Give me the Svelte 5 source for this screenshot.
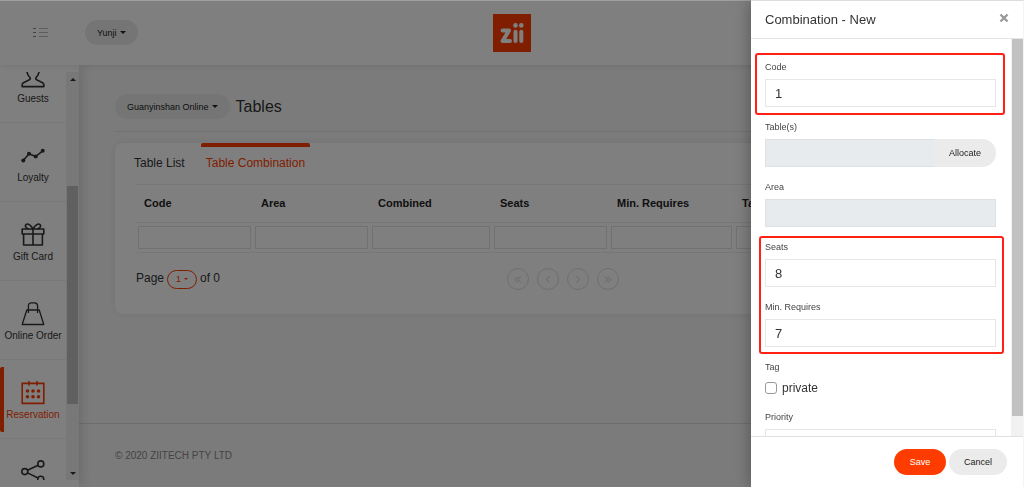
<script>
  const navItems = [
    { label: 'Guests', icon: 'guests' },
    { label: 'Loyalty', icon: 'loyalty' },
    { label: 'Gift Card', icon: 'gift' },
    { label: 'Online Order', icon: 'bag' },
    { label: 'Reservation', icon: 'calendar', active: true },
    { label: '', icon: 'share' }
  ];
  const columns = [
    { name: 'Code', size: 's' },
    { name: 'Area', size: 's' },
    { name: 'Combined', size: 'm' },
    { name: 'Seats', size: 's' },
    { name: 'Min. Requires', size: 'l' },
    { name: 'Tag', size: 'rest' }
  ];
  const pagers = [
    { label: 'First page', d: 'M6 2.5 3 5.5 6 8.5M9 2.5 6 5.5 9 8.5' },
    { label: 'Previous page', d: 'M7.5 2.5 4.5 5.5 7.5 8.5' },
    { label: 'Next page', d: 'M4.5 2.5 7.5 5.5 4.5 8.5' },
    { label: 'Last page', d: 'M3 2.5 6 5.5 3 8.5M6 2.5 9 5.5 6 8.5' }
  ];
  let code = $state('1');
  let tables = $state('');
  let area = $state('');
  let seats = $state('8');
  let minimum = $state('7');
  let isPrivate = $state(false);
  let priority = $state('');
</script>

<div class="app">
  <header class="topbar">
    <button class="menu" aria-label="Toggle menu">
      <svg width="16" height="11" viewBox="0 0 16 11" fill="none">
        <path d="M1 1.5H4M1 5.5H4M1 9.5H4" stroke="#888" />
        <path d="M7 1.5H16M7 5.5H16M7 9.5H16" stroke="#bbb" />
      </svg>
    </button>
    <button class="pill">Yunji<i class="caret"></i></button>
    <a class="logo" href="#home" aria-label="zii">
      <svg width="38" height="38" viewBox="0 0 38 38">
        <rect width="38" height="38" fill="#ff3c00" />
        <g fill="none" stroke="#fff" stroke-width="4" stroke-linejoin="round" stroke-linecap="round">
          <path d="M9.6 16.5H16L9.6 27H17" />
          <path d="M22.5 17.8V27M28.3 17.8V27" />
        </g>
        <circle cx="22.5" cy="11.4" r="2.3" fill="#fff" />
        <circle cx="28.3" cy="11.4" r="2.3" fill="#fff" />
      </svg>
    </a>
  </header>

  <div class="shell">
    <aside class="sidebar">
      <nav>
        <ul>
          {#each navItems as item}
            <li class:active={item.active}>
              <a href="#{item.icon}" aria-label={item.label || item.icon}>
                <svg width="24" height="24" viewBox="0 0 24 24" fill="none" stroke="currentColor" stroke-width="1.6" stroke-linejoin="round">
                  {#if item.icon === 'guests'}
                    <path d="M5.8 5.5C6 9.5 7.2 11 9 12.6Q9.8 14 8.4 14.8L2.4 17.8Q1.1 18.6 1.1 20V21.6H22.9V20Q22.9 18.6 21.6 17.8L15.6 14.8Q14.2 14 15 12.6C16.8 11 18 9.5 18.2 5.5" />
                  {:else if item.icon === 'loyalty'}
                    <path d="M2.3 16.5 8 9.8 14.7 12.5 21.7 6.8" />
                    <g fill="currentColor" stroke="none">
                      <circle cx="2.3" cy="16.5" r="2" /><circle cx="8" cy="9.8" r="2" />
                      <circle cx="14.7" cy="12.5" r="2" /><circle cx="21.7" cy="6.8" r="2" />
                    </g>
                  {:else if item.icon === 'gift'}
                    <path d="M1.2 6H22.8V11H1.2ZM2.6 11V22H21.4V11M12 6V22" />
                    <path d="M12 6C10 2.4 7 .2 5.2 1.4 3.5 2.8 4.8 5 7.5 6M12 6C14 2.4 17 .2 18.8 1.4 20.5 2.8 19.2 5 16.5 6" />
                  {:else if item.icon === 'bag'}
                    <path d="M5.8 8H18.2L22.8 22.5H1.2Z" stroke-width="1.3" />
                    <path d="M7.4 11V4Q7.4 .8 10.4 .8H13.6Q16.6 .8 16.6 4V11" stroke-width="1.3" />
                  {:else if item.icon === 'calendar'}
                    <path d="M1.2 2.4H22.8V22.4H1.2ZM8 0V4.5M16 0V4.5" stroke-linejoin="miter" />
                    <g fill="currentColor" stroke="none">
                      <circle cx="6.5" cy="10" r="1.8" /><circle cx="12" cy="10" r="1.8" /><circle cx="17.5" cy="10" r="1.8" />
                      <circle cx="6.5" cy="15.7" r="1.8" /><circle cx="12" cy="15.7" r="1.8" /><circle cx="17.5" cy="15.7" r="1.8" />
                    </g>
                  {:else}
                    <circle cx="3.8" cy="11.6" r="3" /><circle cx="19.8" cy="3.9" r="3" /><circle cx="19.8" cy="19.3" r="3" />
                    <path d="M6.5 10.3 17.1 5.2M6.5 12.9 17.1 18" />
                  {/if}
                </svg>
                {#if item.label}<span>{item.label}</span>{/if}
              </a>
            </li>
          {/each}
        </ul>
        <div class="track" aria-hidden="true">
          <i class="up"></i><i class="thumb"></i><i class="down"></i>
        </div>
      </nav>
    </aside>

    <div class="page">
      <main>
        <div class="heading">
          <button class="pill">Guanyinshan Online<i class="caret"></i></button>
          <h1>Tables</h1>
        </div>
        <section class="card">
          <div class="tabs" role="tablist">
            <button role="tab" aria-selected="false">Table List</button>
            <button role="tab" aria-selected="true">Table Combination</button>
          </div>
          <table>
            <colgroup>
              {#each columns as column}<col class={column.size} />{/each}
            </colgroup>
            <thead>
              <tr>{#each columns as column}<th>{column.name}</th>{/each}</tr>
            </thead>
            <tbody>
              <tr>
                {#each columns as column}
                  <td><input type="text" aria-label="Filter {column.name}" /></td>
                {/each}
              </tr>
            </tbody>
          </table>
          <div class="paging">
            <div class="pageinfo">
              <span>Page</span>
              <button class="pagenum">1<i class="caret"></i></button>
              <span>of 0</span>
            </div>
            <div class="pagers">
              {#each pagers as pager}
                <button aria-label={pager.label}>
                  <svg width="12" height="11" viewBox="0 0 12 11" fill="none" stroke="currentColor"><path d={pager.d} /></svg>
                </button>
              {/each}
            </div>
          </div>
        </section>
      </main>
      <footer>© 2020 ZIITECH PTY LTD</footer>
    </div>
  </div>

  <div class="backdrop"></div>

  <div class="drawer" role="dialog" aria-label="Combination - New">
    <div class="drawer-head">
      <h2>Combination - New</h2>
      <button class="close" aria-label="Close">
        <svg width="10" height="10" viewBox="0 0 10 10" stroke="#999" stroke-width="2.4"><path d="M1.5 1.5 8.5 8.5M8.5 1.5 1.5 8.5" /></svg>
      </button>
    </div>
    <div class="drawer-body">
      <form>
        <div class="group first">
          <div class="field">
            <label for="code">Code</label>
            <input id="code" type="text" bind:value={code} />
          </div>
        </div>
        <div class="field">
          <label for="tables">Table(s)</label>
          <div class="combo">
            <input id="tables" type="text" disabled bind:value={tables} />
            <button type="button">Allocate</button>
          </div>
        </div>
        <div class="field">
          <label for="area">Area</label>
          <input id="area" type="text" disabled bind:value={area} />
        </div>
        <div class="group second">
          <div class="field">
            <label for="seats">Seats</label>
            <input id="seats" type="text" bind:value={seats} />
          </div>
          <div class="field">
            <label for="minimum">Min. Requires</label>
            <input id="minimum" type="text" bind:value={minimum} />
          </div>
        </div>
        <div class="field tag">
          <span class="caption">Tag</span>
          <label class="check"><input type="checkbox" bind:checked={isPrivate} />private</label>
        </div>
        <div class="field">
          <label for="priority">Priority</label>
          <input id="priority" type="text" bind:value={priority} />
        </div>
      </form>
      <div class="drawer-track" aria-hidden="true"><i></i></div>
    </div>
    <div class="drawer-foot">
      <button class="save">Save</button>
      <button class="cancel">Cancel</button>
    </div>
  </div>
</div>

<style>
  :global(body) { margin: 0; }
  .app, .app * { box-sizing: border-box; }
  .app {
    display: flex;
    flex-direction: column;
    height: 100vh;
    overflow: hidden;
    background: #f7f7f7;
    color: #333;
    font-family: "Liberation Sans", Arial, sans-serif;
    font-size: 12px;
  }
  button, input { font-family: inherit; color: inherit; margin: 0; }
  button { border: 0; padding: 0; background: none; }
  h1, h2 { margin: 0; font-weight: 400; }

  .topbar {
    position: relative;
    z-index: 2;
    flex: none;
    display: flex;
    align-items: center;
    gap: 36px;
    height: 65px;
    padding-left: 32px;
    background: #fff;
    box-shadow: 0 0 8px rgba(0, 0, 0, 0.12);
  }
  .menu { display: flex; width: 17px; }
  .logo { display: flex; position: absolute; left: 50%; transform: translateX(-50%); }
  .pill {
    display: flex;
    align-items: center;
    gap: 3px;
    height: 25px;
    padding: 0 12px;
    border-radius: 13px;
    background: #ebebeb;
    color: #222;
    font-size: 9px;
    white-space: nowrap;
  }
  .caret {
    border: 3px solid transparent;
    border-top-color: currentColor;
    border-bottom: 0;
  }

  .shell { flex: 1; display: flex; min-height: 0; }
  .sidebar {
    position: relative;
    z-index: 1;
    flex: none;
    width: 79px;
    padding: 7px 0;
    background: #fff;
    box-shadow: 0 0 14px rgba(0, 0, 0, 0.2);
  }
  nav { display: flex; height: 100%; overflow: hidden; }
  ul { flex: 1; list-style: none; margin: -28px 0 0; padding: 0; }
  li { height: 79px; border-bottom: 1px solid #f0f0f0; }
  li a {
    display: flex;
    flex-direction: column;
    align-items: center;
    gap: 3px;
    height: 72px;
    padding-top: 21px;
    color: #333;
    font-size: 10px;
    line-height: 14px;
    text-decoration: none;
    white-space: nowrap;
  }
  li.active { padding-top: 7px; }
  li.active a {
    height: 65px;
    padding-top: 14px;
    color: #ff3c00;
    background: linear-gradient(#ff3c00, #ff3c00) left / 4px 100% no-repeat;
    border-radius: 2px;
  }
  .track {
    flex: none;
    display: flex;
    flex-direction: column;
    align-items: center;
    width: 13px;
    background: #f1f1f1;
  }
  .track i { flex: none; }
  .track .up, .track .down { border: 3px solid transparent; }
  .track .up { margin-top: 6px; border-bottom-color: #333; border-top: 0; }
  .track .down { margin: auto 0 5px; border-top-color: #333; border-bottom: 0; }
  .track .thumb { width: 11px; height: 218px; margin-top: 105px; background: #c1c1c1; }

  .page { flex: 1; display: flex; flex-direction: column; min-width: 0; }
  main { flex: 1; padding: 29px 36px 0; }
  .heading {
    display: flex;
    align-items: center;
    gap: 6px;
    height: 38px;
    padding-bottom: 12px;
    border-bottom: 1px solid #e4e4e4;
  }
  h1 { font-size: 16px; line-height: 20px; }
  .card {
    margin-top: 11px;
    padding: 0 20px 14px 21px;
    border-radius: 8px;
    background: #fff;
    box-shadow: 0 0 8px rgba(0, 0, 0, 0.08);
  }
  .tabs { display: flex; gap: 11px; height: 41px; margin-left: -7px; }
  .tabs button {
    height: 40px;
    padding: 0 5px 4px;
    border-top: 4px solid transparent;
    font-size: 12px;
    line-height: 32px;
  }
  .tabs [aria-selected="true"] {
    color: #ff3c00;
    background: linear-gradient(#ff3c00, #ff3c00) top / 100% 4px no-repeat border-box;
    border-radius: 2px;
  }
  table { width: 100%; table-layout: fixed; border-collapse: collapse; }
  col.s { width: 117px; }
  col.m { width: 122px; }
  col.l { width: 125px; }
  tr { border-top: 1px solid #eee; border-bottom: 1px solid #eee; }
  th { height: 38px; padding: 0 8px 2px; color: #222; font-size: 11px; text-align: left; }
  td { height: 30px; padding: 0 2px; }
  td input { display: block; width: 100%; height: 23px; border: 1px solid #e2e2e2; background: #fff; }
  .paging { display: flex; align-items: center; height: 42px; margin-top: 5px; }
  .pageinfo { flex: none; display: flex; align-items: center; gap: 3px; width: 371px; line-height: 18px; }
  .pageinfo span { padding-bottom: 2px; }
  .pagenum {
    display: flex;
    align-items: center;
    justify-content: center;
    gap: 3px;
    width: 30px;
    height: 19px;
    border: 1px solid #ff3c00;
    border-radius: 10px;
    color: #ff3c00;
    font-size: 9px;
  }
  .pagenum .caret { border-width: 2px 2px 0; }
  .pagers { display: flex; gap: 8px; }
  .pagers button {
    display: flex;
    align-items: center;
    justify-content: center;
    width: 22px;
    height: 22px;
    border: 1px solid #dedede;
    border-radius: 50%;
    color: #ccc;
  }
  footer {
    flex: none;
    height: 64px;
    padding-left: 36px;
    border-top: 1px solid #ddd;
    color: #888;
    font-size: 10px;
    line-height: 64px;
  }

  .backdrop {
    position: fixed;
    inset: 0;
    z-index: 3;
    background: rgba(0, 0, 0, 0.5);
    border-top: 1px solid #a0a0a0;
  }
  .drawer {
    position: fixed;
    inset: 0 0 0 auto;
    z-index: 4;
    display: flex;
    flex-direction: column;
    width: 273px;
    background: #fff;
    border-top: 1px solid #ddd;
    border-right: 1px solid #f4f4f4;
    box-shadow: 0 0 16px rgba(0, 0, 0, 0.35);
  }
  .drawer-head {
    flex: none;
    display: flex;
    align-items: center;
    justify-content: space-between;
    height: 38px;
    padding: 0 14px;
    border-bottom: 1px solid #e5e5e5;
  }
  h2 { font-size: 13px; line-height: 18px; }
  .close { display: flex; padding-bottom: 4px; }
  .drawer-body { flex: 1; display: flex; min-height: 0; overflow: hidden; }
  form { flex: 1; padding: 21px 15px 0 14px; }
  .drawer-track { flex: none; width: 12px; background: #f1f1f1; }
  .drawer-track i { display: block; width: 11px; height: 95%; margin-left: auto; background: #c1c1c1; }
  .group { position: relative; }
  .group::after {
    content: "";
    position: absolute;
    border: 2px solid #ff2114;
    border-radius: 3px;
    pointer-events: none;
  }
  .group.first::after { inset: -7px -9px 5px -10px; }
  .group.second::after { inset: -4px -8px 6px -6px; }
  .field { height: 60px; }
  .field.tag { height: 50px; }
  .field > label, .caption {
    display: block;
    margin-bottom: 5px;
    color: #444;
    font-size: 9px;
    line-height: 14px;
  }
  .field input[type="text"] {
    display: block;
    width: 100%;
    height: 28px;
    padding: 0 9px;
    border: 1px solid #e4e6e7;
    border-radius: 0;
    background: #fff;
    font-size: 13px;
  }
  .field input[type="text"]:disabled { background: #e8ebee; border-color: #dde1e3; }
  .combo { display: flex; }
  .combo input[type="text"] { flex: 1; min-width: 0; border-right: 0; }
  .combo button {
    flex: none;
    width: 62px;
    border-radius: 0 14px 14px 0;
    background: #ebebeb;
    color: #222;
    font-size: 9px;
  }
  .field > label.check {
    display: flex;
    align-items: center;
    gap: 5px;
    color: #333;
    font-size: 12px;
    line-height: 18px;
  }
  .check input {
    appearance: none;
    width: 12px;
    height: 12px;
    margin: 0;
    border: 1px solid #999;
    border-radius: 3px;
    background: #fff;
  }
  .drawer-foot {
    flex: none;
    display: flex;
    align-items: center;
    justify-content: flex-end;
    gap: 3px;
    height: 51px;
    padding-right: 16px;
    border-top: 1px solid #e0e0e0;
  }
  .drawer-foot button { height: 26px; border-radius: 13px; font-size: 9px; }
  .save { width: 52px; background: #ff3c00; color: #fff; }
  .cancel { width: 58px; background: #ebebeb; color: #222; }
</style>
